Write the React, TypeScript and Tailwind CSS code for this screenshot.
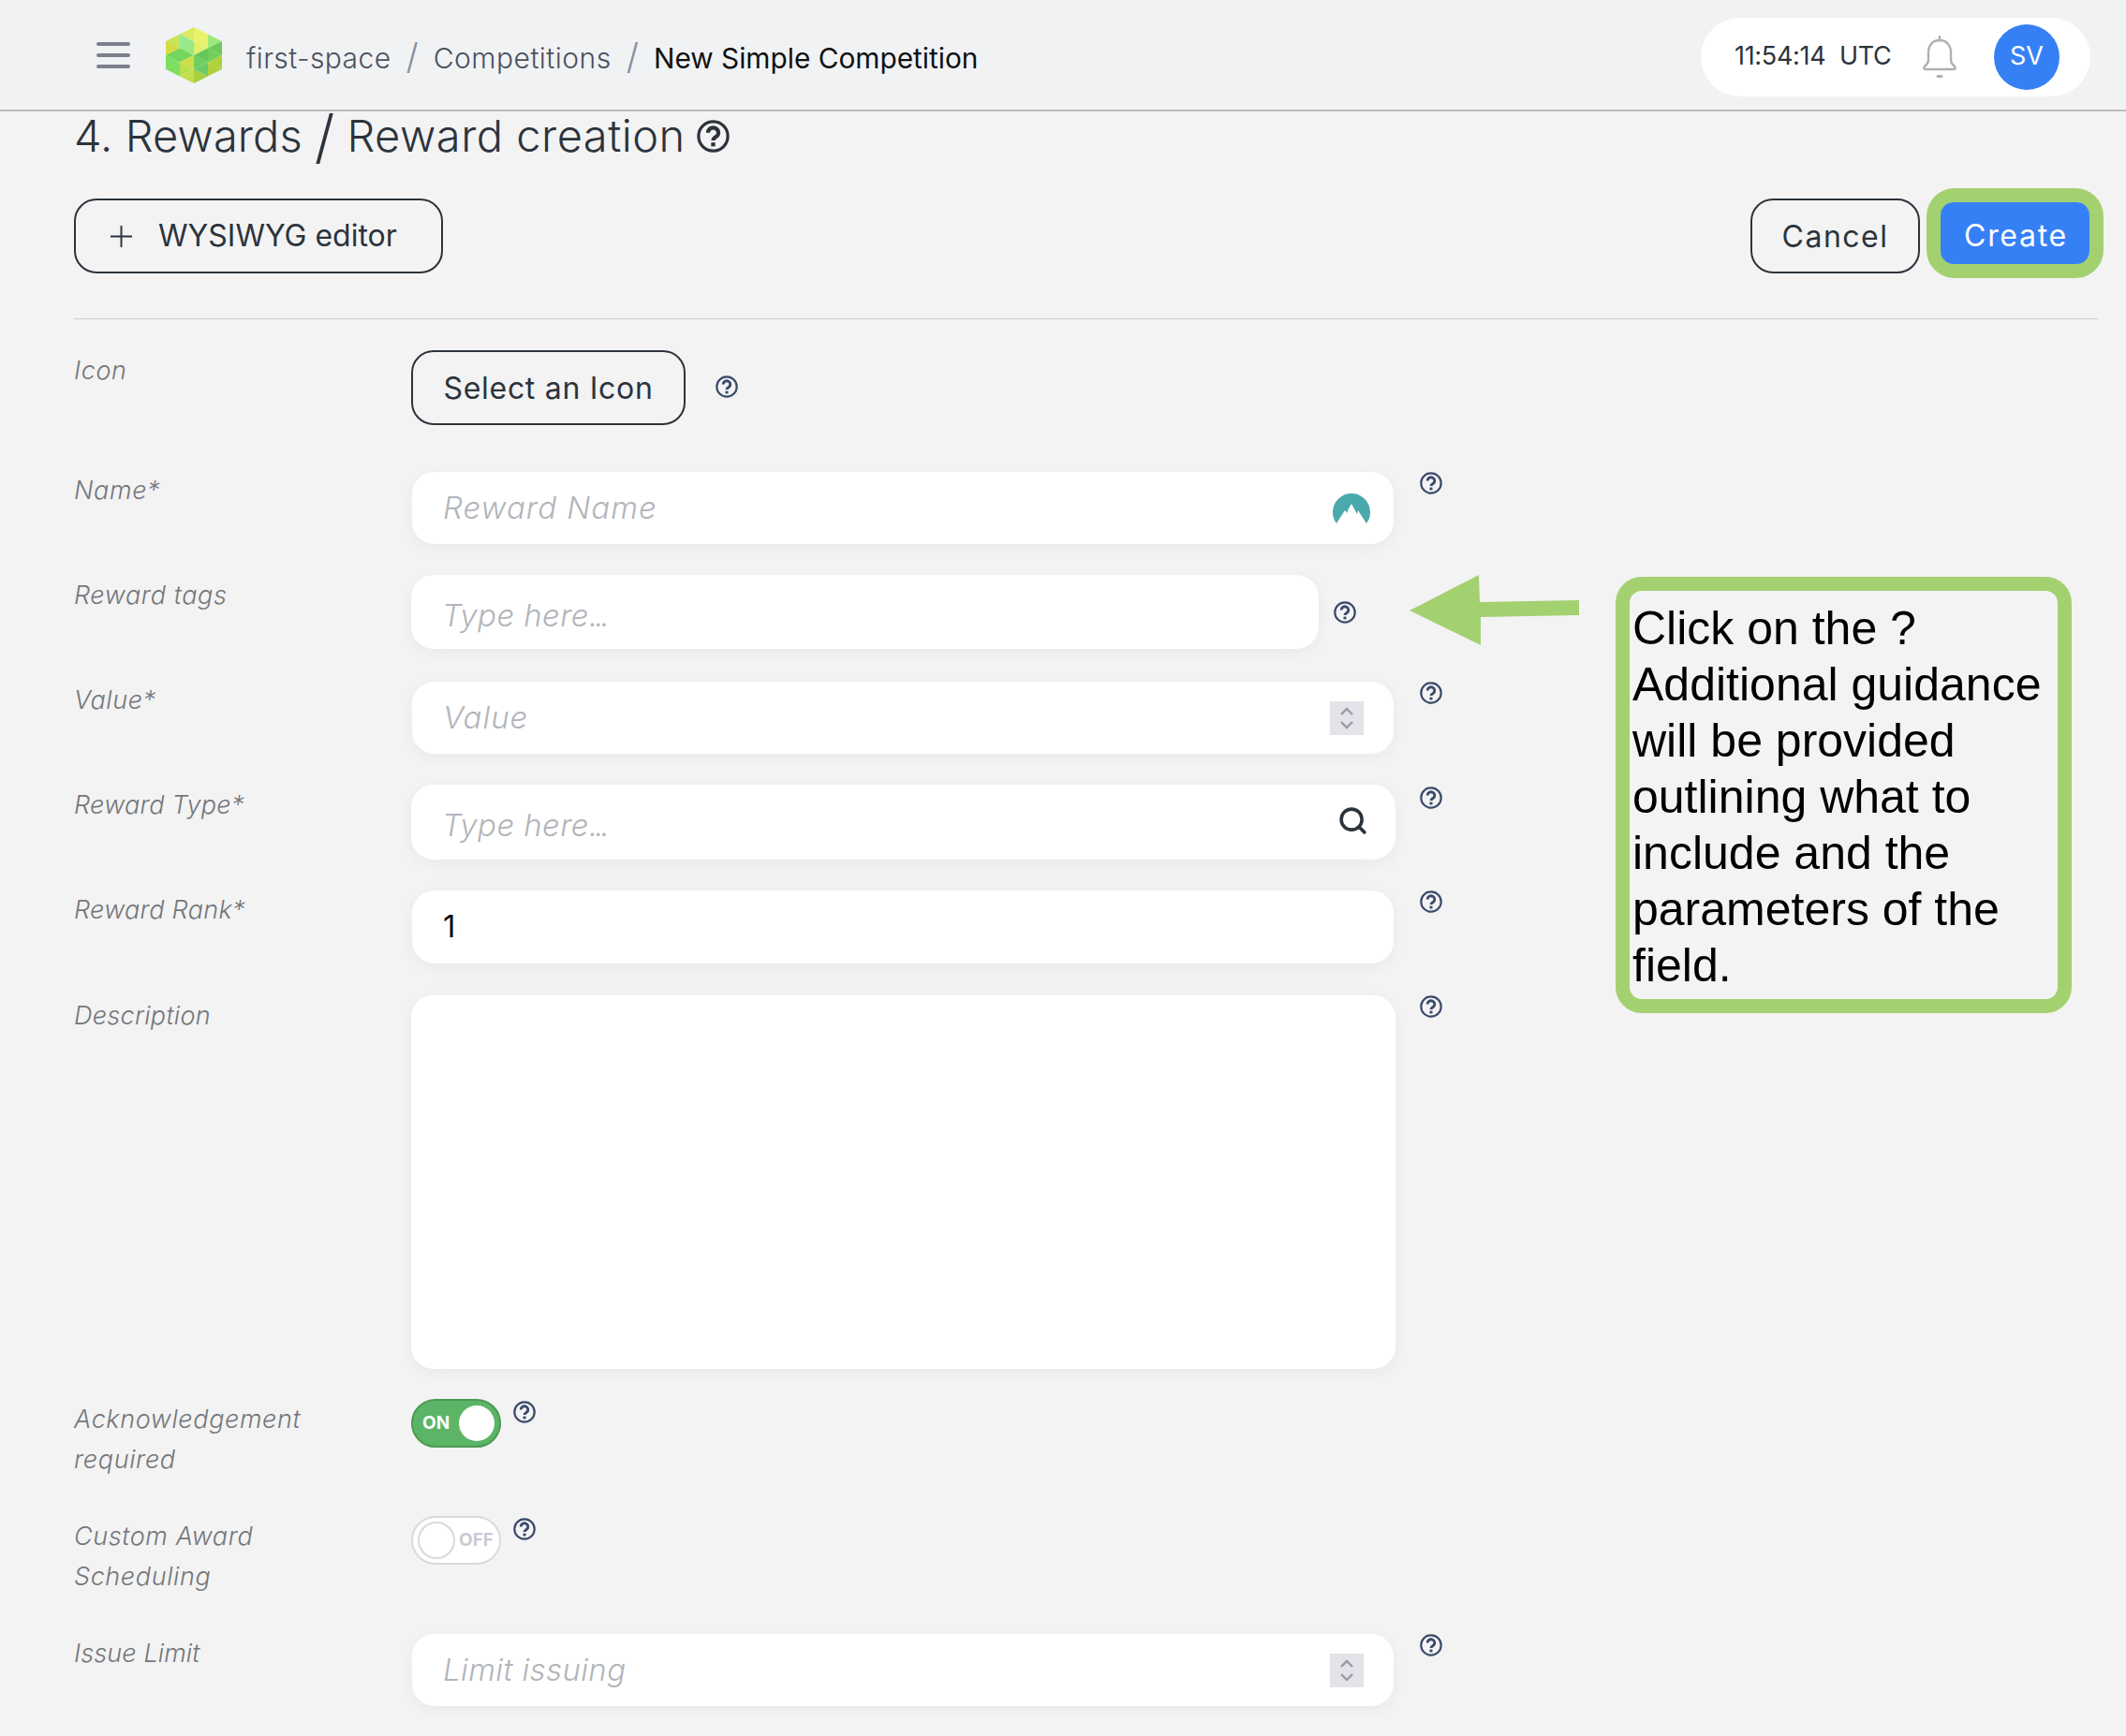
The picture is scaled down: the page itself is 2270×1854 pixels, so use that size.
import { Search } from "lucide-react";
import type { ReactNode } from "react";

const font = "font-['Inter',sans-serif]";

const facets: [string, string][] = [
  ["30,0 15,7.5 30,15", "#dcea62"],
  ["30,0 45,7.5 30,15", "#e9f26a"],
  ["15,7.5 0,15 15,22.5", "#c9e35a"],
  ["15,7.5 30,15 15,22.5", "#96ea8c"],
  ["30,15 45,7.5 45,22.5", "#e9f26a"],
  ["30,15 15,22.5 30,30", "#98e884"],
  ["30,15 45,22.5 30,30", "#dff06a"],
  ["45,7.5 60,15 45,22.5", "#9fe97c"],
  ["0,15 15,22.5 0,30", "#d2dc44"],
  ["60,15 45,22.5 60,30", "#6ccb5a"],
  ["45,22.5 30,30 45,37.5", "#62c85a"],
  ["45,22.5 60,30 45,37.5", "#72cf5c"],
  ["15,22.5 0,30 15,37.5", "#74d65c"],
  ["15,22.5 30,30 15,37.5", "#74d65c"],
  ["0,30 15,37.5 0,45", "#7ade60"],
  ["30,30 15,37.5 30,45", "#cfdc48"],
  ["30,30 45,37.5 30,45", "#6fcf5c"],
  ["60,30 45,37.5 60,45", "#acd23c"],
  ["15,37.5 0,45 15,52.5", "#7fdc5e"],
  ["15,37.5 30,45 15,52.5", "#b9e04c"],
  ["30,45 45,37.5 45,52.5", "#6acb66"],
  ["45,37.5 60,45 45,52.5", "#aed23e"],
  ["30,45 15,52.5 30,60", "#bfe04c"],
  ["30,45 45,52.5 30,60", "#a8d03c"],
];

function Logo() {
  return (
    <svg width="60" height="60" viewBox="0 0 60 60">
      {facets.map(([points, fill]) => (
        <polygon key={points} points={points} fill={fill} />
      ))}
    </svg>
  );
}

function Help({ size = 24, color = "#3b4a6b" }: { size?: number; color?: string }) {
  return (
    <svg width={size} height={size} viewBox="0 0 24 24" fill="none" className="shrink-0">
      <circle cx="12" cy="12" r="10.7" stroke={color} strokeWidth="2.200" />
      <path
        d="M8.200 9.400a3.800 3.600 0 1 1 5.900 3c-1.300.8-2.100 1.300-2.100 2.600"
        stroke={color}
        strokeWidth="2.900"
      />
      <rect x="10.500" y="16.600" width="3" height="2.800" fill={color} />
    </svg>
  );
}

function Bell() {
  return (
    <svg width="38" height="46" viewBox="0 0 38 46" fill="none" stroke="#adb0b5" strokeWidth="2.400">
      <path d="M19 1v4" strokeLinecap="round" />
      <path d="M19 5c-7.500 0-12 5.500-12 13v8c0 3-1.500 5-4 7-1.300 1-1 3 1 3h30c2 0 2.300-2 1-3-2.500-2-4-4-4-7v-8c0-7.500-4.500-13-12-13z" />
      <rect x="15.500" y="42" width="7" height="3" rx="1.500" fill="#adb0b5" stroke="none" />
    </svg>
  );
}

function Mountain() {
  return (
    <svg width="40" height="32" viewBox="0 0 40 32">
      <path
        d="M4 32A20 20 0 1 1 36 32L27 18L26 22L20 11L16 18L15.500 21L13 18Z"
        fill="#4aa9ad"
      />
    </svg>
  );
}

function Spinner() {
  return (
    <div className="w-[36px] h-[36px] bg-[#e4e3e9] flex items-center justify-center">
      <svg width="16" height="24" viewBox="0 0 16 24" fill="none" stroke="#9a99a5" strokeWidth="2.400">
        <path d="M2 8l6-6 6 6M2 16l6 6 6-6" />
      </svg>
    </div>
  );
}

function OutlineButton({ children, className }: { children: ReactNode; className: string }) {
  return (
    <div
      className={`h-[80px] border-2 border-[#2c333c] rounded-[24px] flex items-center text-[32px] text-[#2c333c] ${className}`}
    >
      {children}
    </div>
  );
}

function Label({
  children,
  className = "tracking-[0.6px]",
}: {
  children: ReactNode;
  className?: string;
}) {
  return (
    <div className={`w-[360px] shrink-0 text-[27px] italic font-light leading-[43px] text-[#74777c] ${className}`}>
      {children}
    </div>
  );
}

function Field({
  children,
  width = "w-[1048px] ml-[1px]",
  height = "h-[77px]",
}: {
  children: ReactNode;
  width?: string;
  height?: string;
}) {
  return (
    <div
      className={`${width} ${height} shrink-0 bg-white rounded-[24px] shadow-[0_4px_14px_rgba(60,50,60,0.05)] flex items-center justify-between pl-[33px] text-[33px]`}
    >
      {children}
    </div>
  );
}

function Placeholder({ children, className = "tracking-[1px]" }: { children: ReactNode; className?: string }) {
  return <span className={`italic font-light text-[#b2b5ba] ${className}`}>{children}</span>;
}

function TypeHere() {
  return (
    <span className="italic font-light text-[#b2b5ba] mt-[8px] tracking-[0.4px]">
      Type here<span className="tracking-[-3px]">...</span>
    </span>
  );
}

export default function App() {
  return (
    <div className={`relative w-[2270px] h-[1854px] overflow-hidden bg-[#f3f3f3] ${font}`}>
      <header className="h-[119px] bg-[#f1f2f4] border-b-2 border-[#bdbdbd] flex items-center justify-between pl-[103px] pr-[38px]">
        <div className="flex items-center">
          <div className="w-[36px] flex flex-col gap-[8px]">
            <div className="h-[4px] rounded-full bg-[#7d7f8c]" />
            <div className="h-[4px] rounded-full bg-[#7d7f8c]" />
            <div className="h-[4px] rounded-full bg-[#7d7f8c]" />
          </div>
          <div className="ml-[38px]">
            <Logo />
          </div>
          <div className="ml-[26px] mt-[8px] flex items-center text-[30px] font-light text-[#4a5160]">
            <span className="tracking-[0.4px]">first-space</span>
            <span className="mx-[16px] -mt-[4px] text-[38px] text-[#8a8f98]">/</span>
            <span className="tracking-[0.5px]">Competitions</span>
            <span className="mx-[16px] -mt-[4px] text-[38px] text-[#8a8f98]">/</span>
            <span className="font-normal text-[29.800px] text-[#111111]">New Simple Competition</span>
          </div>
        </div>
        <div className="w-[416px] h-[84px] mt-[4px] bg-white rounded-full flex items-center pl-[36px] pr-[33px]">
          <span className="text-[27px] tracking-[-0.3px] text-[#2c333c] whitespace-pre">11:54:14  UTC</span>
          <div className="ml-auto mr-[39px]">
            <Bell />
          </div>
          <div className="w-[70px] h-[70px] rounded-full bg-[#3680f6] text-white text-[27px] flex items-center justify-center">
            SV
          </div>
        </div>
      </header>

      <main className="pl-[79px] pr-[30px]">
        <h1 className="h-[53px] flex items-center text-[47px] font-light text-[#2c333c]">
          <span className="tracking-[0.1px]">4. Rewards</span>
          <span className="mx-[13px] text-[62px]">/</span>
          <span className="tracking-[0.5px]">Reward creation</span>
          <span className="ml-[12px]">
            <Help size={35} color="#2c333c" />
          </span>
        </h1>

        <div className="mt-[40px] h-[80px] flex items-start justify-between">
          <OutlineButton className="w-[394px] pl-[36px]">
            <svg width="25" height="25" viewBox="0 0 26 26" stroke="#2c333c" strokeWidth="2">
              <path d="M13 1v24M1 13h24" />
            </svg>
            <span className="ml-[27px]">WYSIWYG editor</span>
          </OutlineButton>
          <div className="flex items-start gap-[7px] -mr-[6px]">
            <OutlineButton className="w-[181px] justify-center tracking-[1.500px] pt-[2px]">Cancel</OutlineButton>
            <div className="-mt-[11px] border-[15px] border-[#a4d170] rounded-[30px]">
              <div className="w-[159px] h-[66px] pt-[5px] pl-[2px] bg-[#3680f6] rounded-[14px] text-white text-[32px] tracking-[1.700px] flex items-center justify-center">
                Create
              </div>
            </div>
          </div>
        </div>

        <div className="mt-[48px] h-[1px] bg-[#cfcfd1]" />

        <div className="mt-[33px] flex items-start">
          <Label>Icon</Label>
          <OutlineButton className="w-[293px] justify-center tracking-[0.7px] pt-[2px]">Select an Icon</OutlineButton>
          <div className="ml-[32px] mt-[27px]">
            <Help />
          </div>
        </div>

        <div className="mt-[50px] flex items-start">
          <Label className="tracking-[0.6px] -mt-[2px]">Name*</Label>
          <Field>
            <Placeholder>Reward Name</Placeholder>
            <div className="mr-[25px]">
              <Mountain />
            </div>
          </Field>
          <div className="ml-[28px]">
            <Help />
          </div>
        </div>

        <div className="mt-[33px] flex items-start">
          <Label>Reward tags</Label>
          <Field width="w-[969px]" height="h-[79px]">
            <TypeHere />
          </Field>
          <div className="ml-[16px] mt-[28px]">
            <Help />
          </div>
        </div>

        <div className="mt-[35px] flex items-start">
          <Label className="tracking-[0.6px] -mt-[2px]">Value*</Label>
          <Field>
            <Placeholder>Value</Placeholder>
            <div className="mr-[32px]">
              <Spinner />
            </div>
          </Field>
          <div className="ml-[28px]">
            <Help />
          </div>
        </div>

        <div className="mt-[33px] flex items-start">
          <Label className="tracking-[0.3px]">Reward Type*</Label>
          <Field width="w-[1051px]" height="h-[80px]">
            <TypeHere />
            <Search size={33} color="#2c333c" strokeWidth={2.600} className="mr-[29px] -mt-[4px]" />
          </Field>
          <div className="ml-[26px] mt-[2px]">
            <Help />
          </div>
        </div>

        <div className="mt-[33px] flex items-start">
          <Label className="tracking-[0.3px] -mt-[1px]">Reward Rank*</Label>
          <Field height="h-[78px]">
            <span className="text-[#111111]">1</span>
          </Field>
          <div className="ml-[28px]">
            <Help />
          </div>
        </div>

        <div className="mt-[34px] flex items-start">
          <Label className="tracking-[0.3px]">Description</Label>
          <Field width="w-[1051px]" height="h-[399px]">
            <span />
          </Field>
          <div className="ml-[26px]">
            <Help />
          </div>
        </div>

        <div className="mt-[32px] flex items-start">
          <Label>
            Acknowledgement
            <br />
            required
          </Label>
          <div className="w-[96px] h-[52px] rounded-full bg-[#5cb566] border-[2px] border-[#4a9a52] flex items-center justify-between pl-[10px] pr-[5px] text-white text-[19px] font-bold">
            <span>ON</span>
            <span className="w-[38px] h-[38px] rounded-full bg-white" />
          </div>
          <div className="ml-[13px] mt-[2px]">
            <Help />
          </div>
        </div>

        <div className="mt-[39px] flex items-start">
          <Label>
            Custom Award
            <br />
            Scheduling
          </Label>
          <div className="w-[96px] h-[52px] rounded-full bg-white border-[2px] border-[#d8dade] flex items-center justify-between pl-[5px] pr-[6px] text-[#c9cbd2] text-[19px] font-bold">
            <span className="w-[40px] h-[40px] rounded-full bg-white border-[2px] border-[#d8dade]" />
            <span>OFF</span>
          </div>
          <div className="ml-[13px] mt-[2px]">
            <Help />
          </div>
        </div>

        <div className="mt-[40px] flex items-start">
          <Label className="tracking-[0.1px] -mt-[1px]">Issue Limit</Label>
          <Field>
            <Placeholder className="tracking-[0.4px]">Limit issuing</Placeholder>
            <div className="mr-[32px]">
              <Spinner />
            </div>
          </Field>
          <div className="ml-[28px]">
            <Help />
          </div>
        </div>
      </main>

      {/* annotation drawn over the form */}
      <svg className="absolute left-[1505px] top-[614px]" width="182" height="75" viewBox="0 0 182 75">
        <polygon points="0,38 74,0 75,29 181,27 181,43 76,45 76,75" fill="#a4d170" />
      </svg>
      <div className="absolute left-[1725px] top-[616px] w-[487px] h-[466px] border-[15px] border-[#a4d170] rounded-[28px] bg-[#f3f3f3] pl-[3px] pt-[10px] font-['Liberation_Sans',sans-serif] text-[50px] leading-[60px] text-black">
        Click on the ?
        <br />
        Additional guidance
        <br />
        will be provided
        <br />
        outlining what to
        <br />
        include and the
        <br />
        parameters of the
        <br />
        field.
      </div>
    </div>
  );
}
